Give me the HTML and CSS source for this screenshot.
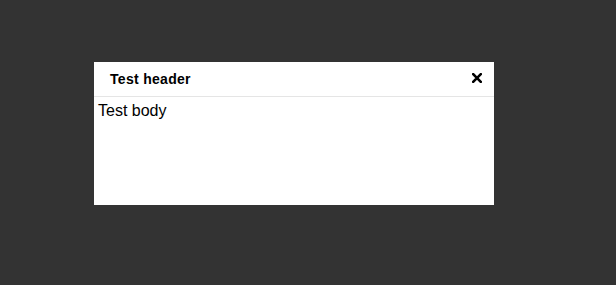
FILE: index.html
```html
<!DOCTYPE html>
<html>
<head>
<meta charset="utf-8">
<link rel="stylesheet" href="styles.css">
</head>
<body>
<div class="modal">
  <div class="modal-header">
    <span class="modal-title">Test header</span>
    <button class="modal-close" aria-label="Close">
      <svg width="10" height="10" viewBox="0 0 10 10"><path d="M1.2 1.2 L8.8 8.8 M8.8 1.2 L1.2 8.8" stroke="#000" stroke-width="2.6" stroke-linecap="square" fill="none"/></svg>
    </button>
  </div>
  <div class="modal-body">Test body</div>
</div>
</body>
</html>
```
FILE: styles.css
```css
html, body {
  margin: 0;
  padding: 0;
  background: #333333;
  width: 616px;
  height: 285px;
  overflow: hidden;
}
body {
  font-family: "Liberation Sans", Arial, sans-serif;
}
.modal {
  margin: 62px 0 0 94px;
  width: 400px;
  height: 143px;
  background: #ffffff;
  display: flex;
  flex-direction: column;
}
.modal-header {
  height: 34px;
  border-bottom: 1px solid #e5e5e5;
  display: flex;
  align-items: center;
  justify-content: space-between;
  padding: 0 12px 0 16px;
}
.modal-title {
  font-size: 14px;
  font-weight: bold;
  letter-spacing: 0.3px;
  color: #000;
}
.modal-close {
  border: 0;
  background: none;
  padding: 0;
  margin: 0 0 3px 0;
  width: 10px;
  height: 10px;
  display: flex;
}
.modal-body {
  flex: 1;
  padding: 5px 4px 4px;
  font-size: 16px;
  color: #000;
}
```
